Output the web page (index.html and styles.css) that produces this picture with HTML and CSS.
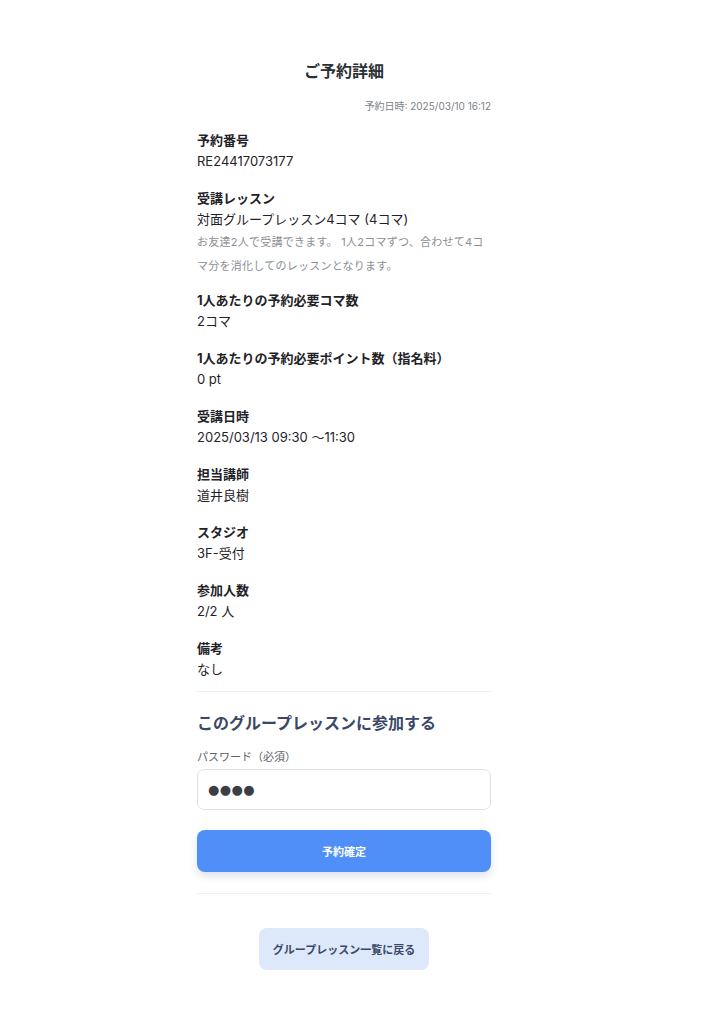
FILE: index.html
```html
<!DOCTYPE html>
<html lang="ja">
<head>
<meta charset="utf-8">
<title>ご予約詳細</title>
<link rel="stylesheet" href="styles.css">
</head>
<body>
<main class="page">
  <h1 class="title">ご予約詳細</h1>
  <p class="stamp">予約日時: 2025/03/10 16:12</p>

  <dl class="details">
    <div class="item"><dt>予約番号</dt><dd>RE24417073177</dd></div>
    <div class="item">
      <dt>受講レッスン</dt>
      <dd>対面グループレッスン4コマ (4コマ)</dd>
      <dd class="desc">お友達2人で受講できます。 1人2コマずつ、合わせて4コマ分を消化してのレッスンとなります。</dd>
    </div>
    <div class="item"><dt>1人あたりの予約必要コマ数</dt><dd>2コマ</dd></div>
    <div class="item"><dt>1人あたりの予約必要ポイント数（指名料）</dt><dd>0 pt</dd></div>
    <div class="item"><dt>受講日時</dt><dd>2025/03/13 09:30 ～11:30</dd></div>
    <div class="item"><dt>担当講師</dt><dd>道井良樹</dd></div>
    <div class="item"><dt>スタジオ</dt><dd>3F-受付</dd></div>
    <div class="item"><dt>参加人数</dt><dd>2/2 人</dd></div>
    <div class="item"><dt>備考</dt><dd>なし</dd></div>
  </dl>

  <section class="join">
    <h2 class="join-title">このグループレッスンに参加する</h2>
    <label class="field-label" for="pw">パスワード（必須）</label>
    <input class="field" id="pw" type="text" value="●●●●" readonly>
    <button class="primary" type="button">予約確定</button>
  </section>

  <div class="back-wrap">
    <button class="back" type="button">グループレッスン一覧に戻る</button>
  </div>
</main>
</body>
</html>
```

FILE: styles.css
```css
* { box-sizing: border-box; }
html, body { margin: 0; padding: 0; background: #fff; }
body {
  font-family: "Inter", "Noto Sans CJK JP", sans-serif;
  color: #1f2328;
}
.page {
  width: 294px;
  margin-left: 197px;
  padding-top: 59px;
}
.title {
  margin: 0;
  font-size: 16px;
  line-height: 24px;
  font-weight: 700;
  text-align: center;
  color: #2b2f36;
}
.stamp {
  margin: 16px 0 0;
  font-size: 10px;
  line-height: 14px;
  text-align: right;
  color: #7d8188;
}
.details {
  margin: 17px 0 0;
  display: flex;
  flex-direction: column;
  gap: 16px;
}
.item { margin: 0; }
.item dt {
  font-size: 13px;
  line-height: 21px;
  font-weight: 700;
  color: #1f2328;
}
.item dd {
  margin: 0;
  font-size: 13px;
  line-height: 21px;
  color: #1f2328;
}
.item dd.desc {
  font-size: 11px;
  line-height: 24px;
  letter-spacing: 0.25px;
  color: #8a8e95;
  margin-bottom: -4px;
}
.join {
  margin-top: 11px;
  border-top: 1px solid #eff1f4;
  border-bottom: 1px solid #eff1f4;
  padding: 19px 0 21px;
}
.join-title {
  margin: 0;
  font-size: 16px;
  line-height: 24px;
  font-weight: 700;
  color: #3a4866;
}
.field-label {
  display: block;
  margin-top: 14px;
  font-size: 11px;
  line-height: 16px;
  color: #5d626a;
}
.field {
  display: block;
  width: 100%;
  height: 41px;
  margin-top: 4px;
  padding: 0 10px;
  border: 1px solid #dfe2e6;
  border-radius: 7px;
  font-family: "DejaVu Sans", sans-serif;
  font-size: 13px;
  letter-spacing: 0.4px;
  color: #3b3f45;
  background: #fff;
  outline: none;
}
.primary {
  display: block;
  width: 100%;
  height: 42px;
  margin-top: 20px;
  border: 0;
  border-radius: 8px;
  background: #4f8ff7;
  color: #fff;
  font-family: "Inter", "Noto Sans CJK JP", sans-serif;
  font-size: 11px;
  font-weight: 700;
  box-shadow: 0 4px 8px rgba(60, 90, 140, 0.18);
}
.back-wrap {
  display: flex;
  justify-content: center;
  padding-top: 34px;
}
.back {
  width: 170px;
  height: 42px;
  border: 0;
  border-radius: 8px;
  background: #dde8fb;
  color: #3a4866;
  font-family: "Inter", "Noto Sans CJK JP", sans-serif;
  font-size: 11px;
  font-weight: 700;
}
```
